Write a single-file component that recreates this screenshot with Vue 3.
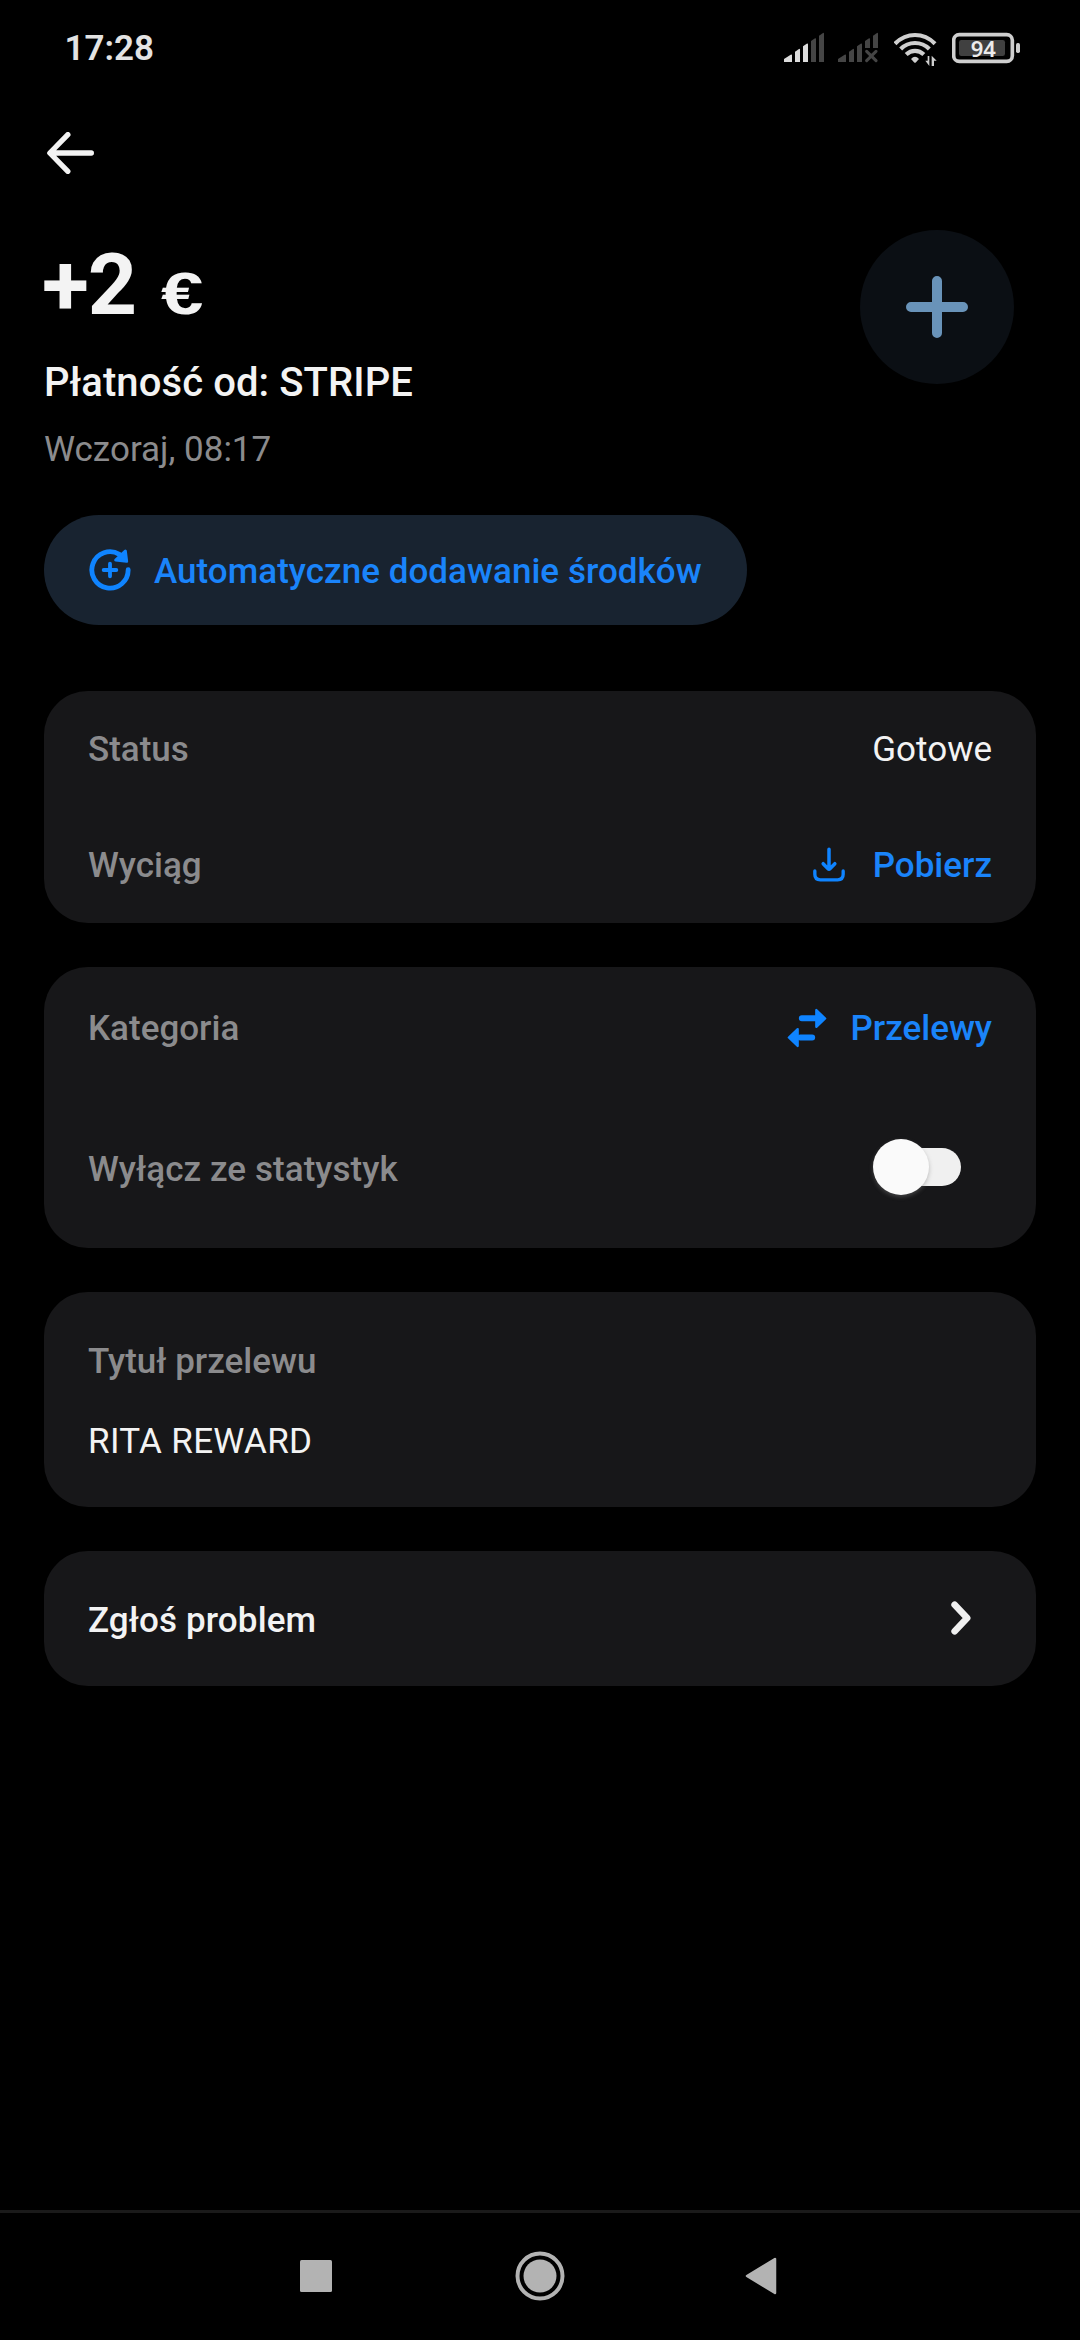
<script setup>
import { ref } from 'vue'

const excluded = ref(false)
</script>

<template>
  <div class="screen">
    <header class="status-bar">
      <span class="clock">17:28</span>
      <div class="indicators">
        <svg class="signal" width="40" height="40" viewBox="72 54 120 120">
          <g fill="#dcdcdc">
            <path d="M72 156V147L92 134.500Q96 132 96 136V156Z" />
            <path d="M105 156V125L116 117.500Q120 115 120 119V156Z" />
            <path d="M129 156V109L140 101.500Q144 99 144 103V156Z" />
          </g>
          <g fill="#454545">
            <path d="M153 156V93L164 85.500Q168 83 168 87V156Z" />
            <path d="M177 156V77L188 69.500Q192 67 192 71V156Z" />
          </g>
        </svg>
        <svg class="signal" width="40" height="40" viewBox="234 54 120 120">
          <g fill="#454545">
            <path d="M234 156V147L254 134.500Q258 132 258 136V156Z" />
            <path d="M267 156V125L278 117.500Q282 115 282 119V156Z" />
            <path d="M291 156V109L302 101.500Q306 99 306 103V156Z" />
            <path d="M315 114V93L326 85.500Q330 83 330 87V114Z" />
            <path d="M339 114V77L350 69.500Q354 67 354 71V114Z" />
          </g>
          <path d="M320 124L348 152M348 124L320 152" stroke="#454545" stroke-width="9" stroke-linecap="round" />
        </svg>
        <svg class="wifi" width="43" height="40" viewBox="402 54 129 120">
          <g fill="none" stroke="#cfcfcf" stroke-width="12.500">
            <path d="M405 101Q431 75 465 75Q499 75 525 101" />
            <path d="M422 117Q440 99 465 99Q490 99 508 117" />
            <path d="M438.500 133.500Q450 122.500 465 122.500Q480 122.500 491.500 133.500" />
          </g>
          <path d="M453 147Q465 134 477 147L468 157Q465 160 462 157Z" fill="#cfcfcf" />
          <path d="M508 138V168L496 152H503V138ZM515 168V137L530 152H522V168Z" fill="#cfcfcf" />
        </svg>
        <svg class="battery" width="68" height="40" viewBox="576 54 204 120">
          <rect x="581" y="74" width="176" height="80" rx="17" fill="none" stroke="#cfcfcf" stroke-width="11" />
          <rect x="597" y="90" width="138" height="48" rx="7" fill="#404040" />
          <rect x="768" y="99" width="12" height="30" rx="5" fill="#cfcfcf" />
          <text x="670" y="140" text-anchor="middle" class="level">94</text>
        </svg>
      </div>
    </header>

    <nav class="top-bar">
      <svg width="48" height="42" viewBox="50 366 144 126">
        <path d="M112.500 374L58.500 429L112.500 484M60 429H183" fill="none" stroke="#f3f3f3" stroke-width="16" stroke-linecap="round" stroke-linejoin="round" />
      </svg>
    </nav>

    <section class="hero">
      <div class="summary">
        <div class="amount"><span class="value">+2</span><span class="currency">€</span></div>
        <h1 class="title">Płatność od: STRIPE</h1>
        <div class="date">Wczoraj, 08:17</div>
      </div>
      <div class="avatar">
        <svg width="62" height="62" viewBox="0 0 62 62">
          <path d="M31 5V57M5 31H57" stroke="#6993b9" stroke-width="10" stroke-linecap="round" />
        </svg>
      </div>
    </section>

    <button class="chip" type="button">
      <svg width="44" height="44" viewBox="174 144 132 132">
        <path d="M294.500 209A54.500 54.500 0 1 1 268 163" fill="none" stroke="#0f84ff" stroke-width="14.500" stroke-linecap="round" />
        <path d="M286 153L290 184L257 180Z" fill="#0f84ff" stroke="#0f84ff" stroke-width="9" stroke-linejoin="round" />
        <path d="M240 191V229M221 210H259" stroke="#0f84ff" stroke-width="11.500" stroke-linecap="round" />
      </svg>
      <span class="chip-label">Automatyczne dodawanie środków</span>
    </button>

    <main class="cards">
      <section class="card">
        <div class="row">
          <span class="label">Status</span>
          <span class="text">Gotowe</span>
        </div>
        <div class="row">
          <span class="label">Wyciąg</span>
          <span class="link">
            <svg class="download" width="34" height="36" viewBox="153 499 102 108">
              <path d="M204 506V564M186.500 549L200.500 563.500Q204 567 207.500 563.500L221.500 549" fill="none" stroke="#0f84ff" stroke-width="10.500" stroke-linecap="round" stroke-linejoin="round" />
              <path d="M161.500 571V581Q161.500 597.500 178 597.500H230Q246.500 597.500 246.500 581V571" fill="none" stroke="#0f84ff" stroke-width="10" stroke-linecap="round" />
            </svg>
            Pobierz
          </span>
        </div>
      </section>

      <section class="card">
        <div class="row category">
          <span class="label">Kategoria</span>
          <span class="link">
            <svg class="transfer" width="40" height="40" viewBox="78 171 120 120">
              <g stroke="#0f84ff" stroke-linecap="round" stroke-linejoin="round" fill="#0f84ff">
                <path d="M122.500 202H165M118 259.500H153.500" stroke-width="18" />
                <path d="M166 177V227.500L192.500 202.500ZM110 234.500V285L83.500 259.500Z" stroke-width="7" />
              </g>
            </svg>
            Przelewy
          </span>
        </div>
        <div class="row exclude">
          <span class="label">Wyłącz ze statystyk</span>
          <span class="toggle" role="switch" :aria-checked="excluded" @click="excluded = !excluded">
            <span class="thumb" :class="{ on: excluded }"></span>
          </span>
        </div>
      </section>

      <section class="card note">
        <span class="label">Tytuł przelewu</span>
        <span class="text reference">RITA REWARD</span>
      </section>

      <section class="card report">
        <span class="report-label">Zgłoś problem</span>
        <svg width="20" height="36" viewBox="271 180 60 108">
          <path d="M282 194L319.500 234L282 274" fill="none" stroke="#f0f0f0" stroke-width="20" stroke-linecap="round" stroke-linejoin="round" />
        </svg>
      </section>
    </main>

    <footer class="system-nav">
      <svg width="32" height="32"><rect width="32" height="32" rx="1.500" fill="#b3b3b3" /></svg>
      <svg class="home" width="50" height="50" viewBox="0 0 50 50">
        <circle cx="25" cy="25" r="22.500" fill="none" stroke="#b3b3b3" stroke-width="4" />
        <circle cx="25" cy="25" r="16.500" fill="#b3b3b3" />
      </svg>
      <svg width="32" height="38" viewBox="0 0 32 38">
        <path d="M2 19L30 2V36Z" fill="#b3b3b3" stroke="#b3b3b3" stroke-width="2.500" stroke-linejoin="round" />
      </svg>
    </footer>
  </div>
</template>

<style>
body {
  background: #000;
}
</style>

<style scoped>
.screen {
  box-sizing: border-box;
  display: flex;
  flex-direction: column;
  width: 1080px;
  height: 2340px;
  overflow: hidden;
  background: #000;
  color: #f3f3f3;
  font-family: Roboto, "Noto Sans", sans-serif;
  font-size: 35px;
  line-height: 44px;
}

svg {
  display: block;
  flex: none;
}

.status-bar {
  display: flex;
  align-items: center;
  justify-content: space-between;
  height: 96px;
  padding: 0 60px 0 64.500px;
}

.clock {
  padding-top: 2px;
  color: #e3e3e3;
  font-weight: 600;
}

.indicators {
  display: flex;
  align-items: center;
}

.signal {
  margin-right: 14px;
}

.signal + .wifi {
  margin-left: 2px;
  margin-right: 15px;
}

.level {
  fill: #ececec;
  font: 600 66px "Noto Sans", sans-serif;
}

.top-bar {
  display: flex;
  align-items: center;
  height: 114px;
  padding-left: 46.500px;
}

.hero {
  display: flex;
  align-items: flex-start;
  justify-content: space-between;
  height: 262px;
  padding: 0 66px 0 44px;
}

.amount {
  display: flex;
  align-items: baseline;
  height: 149px;
  line-height: 149px;
  font-weight: 700;
}

.value {
  margin-left: -2px;
  font-size: 86px;
  letter-spacing: -1.200px;
}

.currency {
  margin-left: 25px;
  font-family: "Liberation Sans", sans-serif;
  font-size: 60px;
  transform: scaleX(1.270);
  transform-origin: left;
}

.title {
  margin: 0;
  font-size: 40px;
  font-weight: 500;
  line-height: 48px;
  letter-spacing: 0.090px;
}

.date {
  margin-top: 20px;
  color: #8b8b8d;
  line-height: 46px;
}

.avatar {
  display: flex;
  align-items: center;
  justify-content: center;
  width: 154px;
  height: 154px;
  margin-top: 20px;
  border-radius: 50%;
  background: #0b0f14;
}

.chip {
  box-sizing: border-box;
  display: flex;
  align-items: center;
  align-self: flex-start;
  width: 703px;
  height: 110px;
  margin: 43px 0 0 44px;
  padding: 0 0 0 44px;
  border: 0;
  border-radius: 55px;
  background: #182330;
  color: #1a84fa;
  font: 500 35px/44px Roboto, sans-serif;
}

.chip-label {
  margin-left: 22px;
  padding-top: 4px;
  letter-spacing: 0.030px;
  white-space: nowrap;
}

.cards {
  display: flex;
  flex-direction: column;
  gap: 44px;
  padding: 66px 44px 0;
}

.card {
  box-sizing: border-box;
  padding: 0 44px;
  border-radius: 44px;
  background: #171719;
}

.row {
  display: flex;
  align-items: center;
  justify-content: space-between;
  height: 116px;
}

.row .label,
.row .text,
.row .link {
  padding-top: 2px;
}

.category {
  height: 121px;
}

.exclude {
  height: 160px;
}

.label {
  color: #8b8b8d;
  font-weight: 500;
}

.exclude .label {
  padding-top: 4px;
  letter-spacing: 0.060px;
}

.text {
  color: #f3f3f3;
  font-weight: 400;
}

.link {
  display: flex;
  align-items: center;
  color: #1a84fa;
  font-weight: 500;
}

.download {
  margin: 0 27px 3px 0;
}

.transfer {
  margin: 0 23px 2px 0;
}

.toggle {
  position: relative;
  width: 80px;
  height: 38px;
  margin: 0 31px 2px 0;
  border-radius: 19px;
  background: #f0f0f0;
}

.thumb {
  position: absolute;
  top: -9px;
  left: -8px;
  width: 56px;
  height: 56px;
  border-radius: 50%;
  background: #fafafa;
  box-shadow: 0 2px 4px rgba(120, 120, 120, 0.450);
}

.thumb.on {
  left: 32px;
}

.note {
  display: flex;
  flex-direction: column;
  gap: 36px;
  height: 215px;
  padding-top: 48px;
}

.reference {
  letter-spacing: 0.320px;
}

.report {
  display: flex;
  align-items: center;
  justify-content: space-between;
  height: 135px;
  padding-right: 65px;
}

.report-label {
  padding-top: 4px;
  font-weight: 500;
  letter-spacing: 0.120px;
}

.report svg {
  margin-bottom: 1px;
}

.system-nav {
  box-sizing: border-box;
  display: flex;
  align-items: center;
  height: 130px;
  margin-top: auto;
  padding: 0 0 2px 300px;
  border-top: 3px solid #1a1a1a;
}

.system-nav svg + svg {
  margin-left: 180px;
}

.system-nav svg + .home {
  margin-left: 182.500px;
}
</style>
